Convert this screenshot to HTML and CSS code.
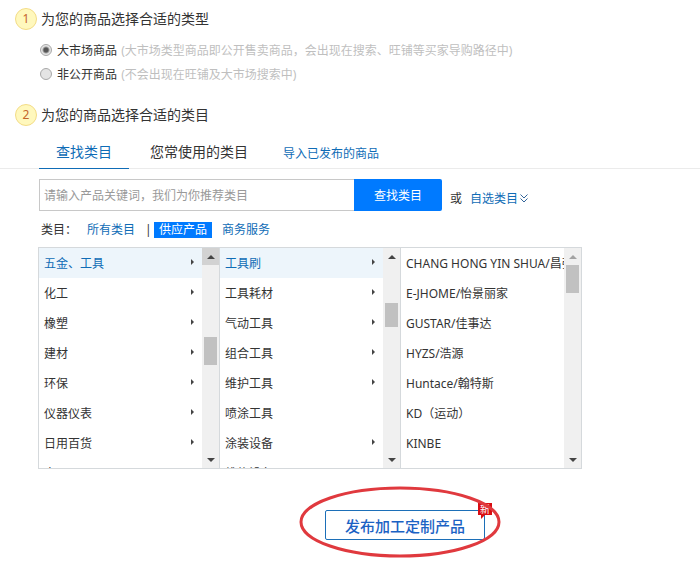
FILE: index.html
```
<!DOCTYPE html>
<html lang="zh-CN">
<head>
  <meta charset="UTF-8" />
  <meta name="viewport" content="width=device-width, initial-scale=1.0"/>
  <title>发布商品</title>
  <link rel="stylesheet" href="styles.css">
</head>
<body>
  <form id="publishForm">
    <section class="step">
      <h2><span class="num">1</span>为您的商品选择合适的类型</h2>
      <div class="option">
        <input type="radio" name="type" id="typeOpen" checked />
        <label for="typeOpen">大市场商品 <span class="hint">(大市场类型商品即公开售卖商品，会出现在搜索、旺铺等买家导购路径中)</span></label>
      </div>
      <div class="option">
        <input type="radio" name="type" id="typePrivate" />
        <label for="typePrivate">非公开商品 <span class="hint">(不会出现在旺铺及大市场搜索中)</span></label>
      </div>
    </section>

    <section class="step">
      <h2><span class="num">2</span>为您的商品选择合适的类目</h2>
    </section>

    <nav class="tabs">
      <a href="#" class="tab active">查找类目</a>
      <a href="#" class="tab">您常使用的类目</a>
      <a href="#" class="import">导入已发布的商品</a>
    </nav>

    <div class="content">
      <div class="search">
        <input type="text" id="keyword" aria-label="产品关键词" placeholder="请输入产品关键词，我们为你推荐类目" />
        <button type="button" class="search-btn">查找类目</button>
        <span class="or">或</span>
        <a href="#" class="self">自选类目<svg width="8" height="9" viewBox="0 0 8 9" fill="none" stroke="#35669a"><path d="M.5 .5L4 4L7.500 .5M.5 4.500L4 8L7.500 4.500"/></svg></a>
      </div>

      <div class="filter">
        <span class="filter-label">类目：</span>
        <a href="#">所有类目</a>
        <span class="bar">|</span>
        <a href="#" class="current">供应产品</a>
        <a href="#">商务服务</a>
      </div>

      <div class="picker">
        <div class="col">
          <ul>
            <li class="selected more">五金、工具</li>
            <li class="more">化工</li>
            <li class="more">橡塑</li>
            <li class="more">建材</li>
            <li class="more">环保</li>
            <li class="more">仪器仪表</li>
            <li class="more">日用百货</li>
            <li class="more">电器工具</li>
          </ul>
          <div class="scroll">
            <span class="arrow up pressed"></span>
            <span class="thumb thumb-middle"></span>
            <span class="arrow down"></span>
          </div>
        </div>
        <div class="col">
          <ul>
            <li class="selected more">工具刷</li>
            <li class="more">工具耗材</li>
            <li class="more">气动工具</li>
            <li class="more">组合工具</li>
            <li class="more">维护工具</li>
            <li>喷涂工具</li>
            <li class="more">涂装设备</li>
            <li>维修设备</li>
          </ul>
          <div class="scroll">
            <span class="arrow up"></span>
            <span class="thumb thumb-upper"></span>
            <span class="arrow down"></span>
          </div>
        </div>
        <div class="col">
          <ul>
            <li>CHANG HONG YIN SHUA/昌弘</li>
            <li>E-JHOME/怡景丽家</li>
            <li>GUSTAR/佳事达</li>
            <li>HYZS/浩源</li>
            <li>Huntace/翰特斯</li>
            <li>KD（运动）</li>
            <li>KINBE</li>
          </ul>
          <div class="scroll">
            <span class="arrow up disabled"></span>
            <span class="thumb"></span>
            <span class="arrow down"></span>
          </div>
        </div>
      </div>
    </div>

    <div class="submit">
      <div class="publish">
        <button type="submit">发布加工定制产品</button>
        <span class="new">新</span>
        <svg class="circle" width="202" height="72" viewBox="0 0 202 72" fill="none" stroke="#e0393e" stroke-width="3"><ellipse cx="101" cy="36" rx="99" ry="34"/></svg>
      </div>
    </div>
  </form>
</body>
</html>
```

FILE: styles.css
```
* {
  box-sizing: border-box;
}
body {
  margin: 0;
  background: #fff;
  color: #333;
  font-family: "Noto Sans", "Noto Sans CJK SC", sans-serif;
  font-size: 12px;
  line-height: 24px;
}
a {
  color: #0f6cb6;
  text-decoration: none;
}
input, button {
  font-family: inherit;
  font-size: 12px;
}

/* steps */
.step {
  padding: 7px 15px 0;
}
.step + .step {
  padding-top: 16px;
}
h2 {
  display: flex;
  align-items: center;
  gap: 4px;
  margin: 0 0 8px;
  font-size: 14px;
  font-weight: normal;
}
.num {
  width: 22px;
  height: 22px;
  border: 1px solid #f3dc86;
  border-radius: 50%;
  background: #fff8bd;
  color: #c4662c;
  font-size: 12px;
  line-height: 20px;
  text-align: center;
}
.option {
  display: flex;
  align-items: center;
  gap: 5px;
  padding-left: 25px;
}
.option input {
  appearance: none;
  width: 12px;
  height: 12px;
  margin: 0 0 2px;
  border: 1px solid #a8a8a8;
  border-radius: 50%;
  background: #e4e4e4;
}
.option input:checked {
  background: radial-gradient(circle, #555 0, #555 2px, #e4e4e4 4px);
}
.hint {
  margin-left: 1px;
  color: #bfbfbf;
}

/* tabs */
.tabs {
  display: flex;
  gap: 4px;
  padding-left: 39px;
  border-bottom: 1px solid #ebebeb;
  line-height: 32px;
}
.tab {
  height: 34px;
  margin-bottom: -1px;
  padding: 1px 17px 0;
  color: #333;
  font-size: 14px;
}
.tab.active {
  border-bottom: 1px solid #0f6cb6;
  color: #0f6cb6;
}
.import {
  height: 33px;
  padding: 3px 14px 0;
}

.content {
  padding: 10px 38px 0;
}

/* search */
.search {
  display: flex;
  align-items: center;
  padding-left: 1px;
}
.search input {
  width: 315px;
  height: 32px;
  padding: 0 4px;
  border: 1px solid #c8c8c8;
  border-right: none;
  outline: none;
}
.search input::placeholder {
  color: #999;
}
.search-btn {
  width: 88px;
  height: 32px;
  border: none;
  border-radius: 0 2px 2px 0;
  background: #007aff;
  color: #fff;
  cursor: pointer;
}
.or {
  padding: 8px 8px 0;
}
.self {
  padding-top: 8px;
}
.self svg {
  margin-left: 2px;
}

/* category filter */
.filter {
  display: flex;
  align-items: center;
  height: 36px;
  padding: 2px 0 0 3px;
}
.filter a {
  margin-right: 10px;
  line-height: 16px;
}
.filter-label {
  margin-right: 10px;
}
.bar {
  width: 9px;
}
.filter .current {
  padding: 0 5px;
  background: #007aff;
  color: #fff;
}

/* category picker */
.picker {
  display: flex;
  width: fit-content;
  height: 222px;
  border: 1px solid #d5d9dc;
  border-right: none;
}
.col {
  display: flex;
  width: 181px;
  border-right: 1px solid #d5d9dc;
}
.col ul {
  flex: 1;
  margin: 0;
  padding: 0;
  overflow: hidden;
  list-style: none;
  white-space: nowrap;
}
.col li {
  display: flex;
  align-items: center;
  justify-content: space-between;
  height: 30px;
  padding: 2px 8px 0 5px;
}
.col li.selected {
  background: #edf5fb;
  color: #0f6cb6;
}
.col li.more::after {
  content: "";
  margin-bottom: 4px;
  border: 3px solid transparent;
  border-left: 3px solid #444;
  border-right: none;
}
.scroll {
  display: flex;
  flex-direction: column;
  align-items: center;
  width: 17px;
  background: #f0f0f0;
}
.arrow {
  display: flex;
  align-items: center;
  justify-content: center;
  width: 17px;
  height: 17px;
}
.arrow::after {
  content: "";
  border: 4px solid transparent;
}
.up::after {
  border-top: none;
  border-bottom-color: #444;
}
.down {
  margin-top: auto;
}
.down::after {
  border-bottom: none;
  border-top-color: #444;
}
.pressed {
  background: #d2d2d2;
}
.disabled::after {
  border-bottom-color: #a3a3a3;
}
.thumb {
  width: 13px;
  height: 28px;
  background: #c1c1c1;
}
.thumb-middle {
  margin-top: 72px;
}
.thumb-upper {
  height: 24px;
  margin-top: 38px;
}

/* publish button */
.submit {
  padding: 41px 0 20px 325px;
}
.publish {
  position: relative;
  width: 160px;
}
.publish button {
  display: block;
  width: 160px;
  height: 30px;
  padding: 0;
  border: 1px solid #1c6fb8;
  border-radius: 2px;
  background: #fff;
  color: #1b62c4;
  font-size: 15px;
  font-weight: 500;
  cursor: pointer;
}
.new {
  position: absolute;
  top: -7px;
  right: -7px;
  width: 14px;
  height: 12px;
  background: #d90d12;
  color: #fff;
  font-size: 10px;
  line-height: 12px;
  text-align: center;
}
.new::after {
  content: "";
  position: absolute;
  top: 12px;
  left: 3px;
  border-top: 4px solid #d90d12;
  border-right: 4px solid transparent;
}
.circle {
  position: absolute;
  top: -24px;
  left: -26px;
  pointer-events: none;
}
```
